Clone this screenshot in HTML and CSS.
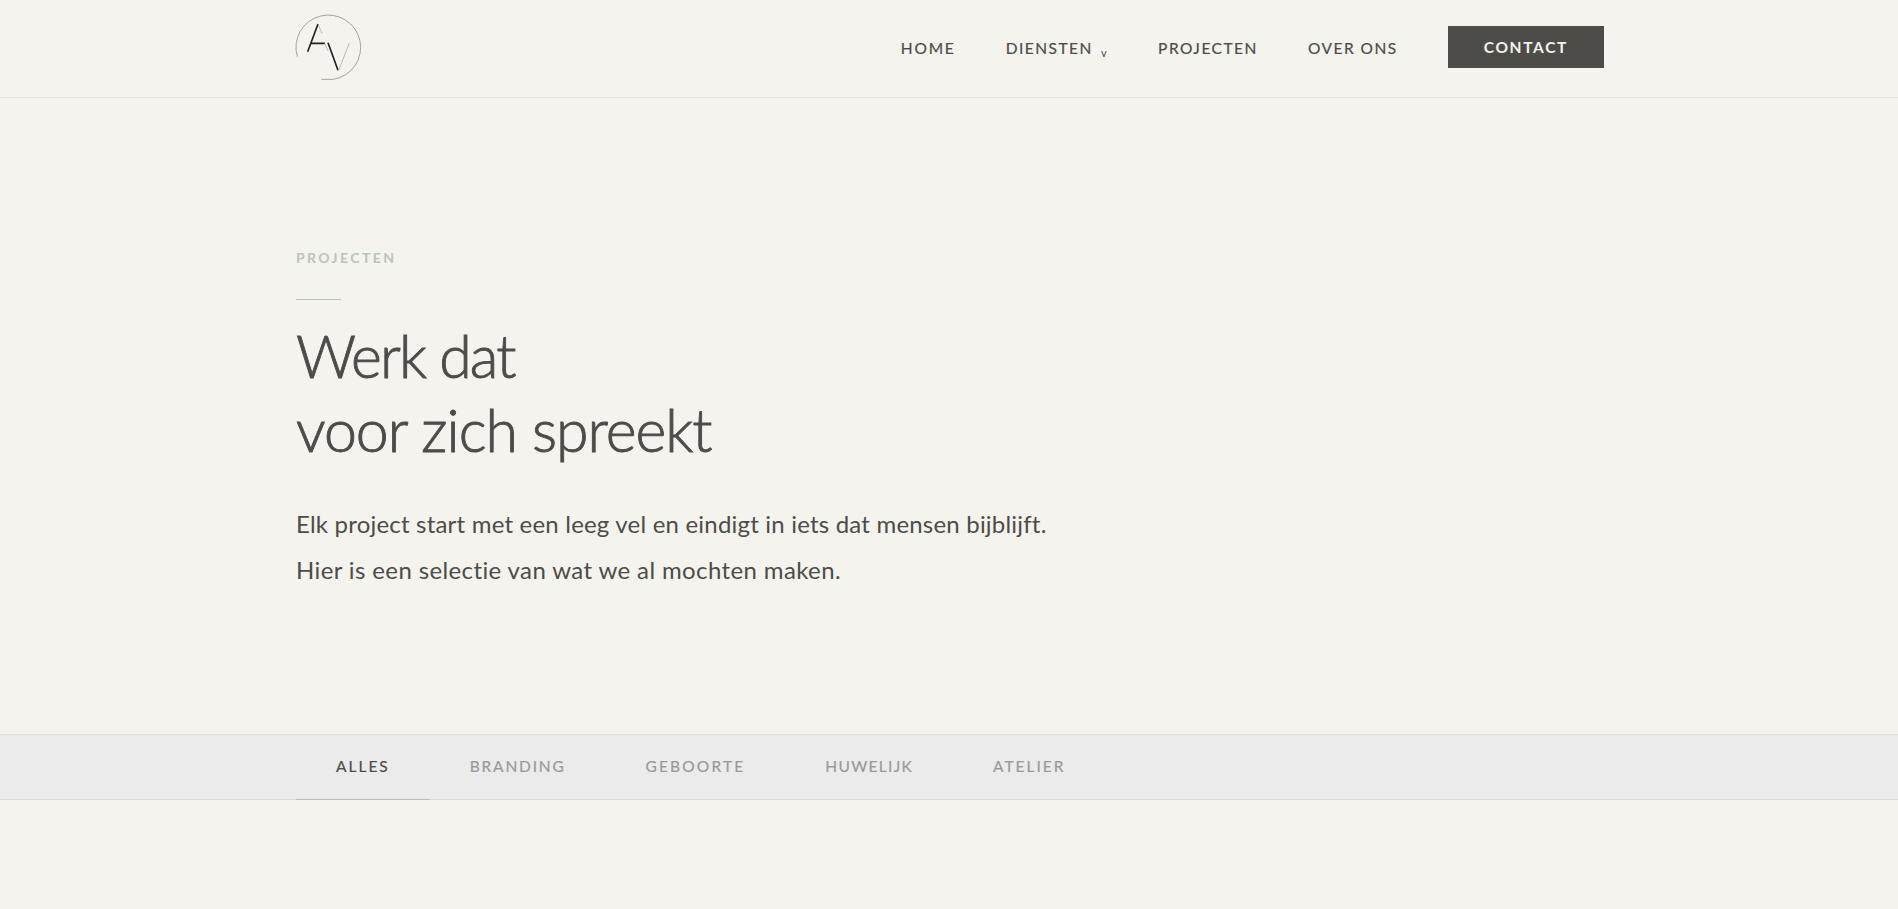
FILE: index.html
```
<!DOCTYPE html>
<html lang="nl">
<head>
  <meta charset="UTF-8" />
  <meta name="viewport" content="width=device-width, initial-scale=1.0"/>
  <title>Projecten</title>
  <link rel="stylesheet" href="styles.css">
</head>
<body>
  <header class="header">
    <div class="container header-inner">
      <a href="#" class="logo" aria-label="AV">
        <svg viewBox="48 45 195 195" fill="none">
          <path class="ring" d="M52 170 A97 97 0 1 1 160 238 L124 238"/>
          <path class="thick" d="M83 155 L114 72 M93 130 H135 M144 128 L174 211"/>
          <path class="thin" d="M114 72 L126 100 M134 130 L144 153 M176 211 L208 129"/>
        </svg>
      </a>
      <nav class="nav">
        <a href="#" class="nav-link">Home</a>
        <a href="#" class="nav-link nav-diensten">Diensten<span class="caret">v</span></a>
        <a href="#" class="nav-link nav-projecten">Projecten</a>
        <a href="#" class="nav-link nav-over">Over ons</a>
        <a href="#" class="btn">Contact</a>
      </nav>
    </div>
  </header>

  <section class="hero">
    <div class="container">
      <p class="label">Projecten</p>
      <div class="line"></div>
      <h1><span class="title-top">Werk dat</span><br>voor zich spreekt</h1>
      <p class="intro">Elk project start met een leeg vel en eindigt in iets dat mensen bijblijft.<br><span class="intro-more">Hier is een selectie van wat we al mochten maken.</span></p>
    </div>
  </section>

  <div class="filters">
    <div class="container filter-list">
      <a href="#" class="filter active">Alles</a>
      <a href="#" class="filter branding">Branding</a>
      <a href="#" class="filter geboorte">Geboorte</a>
      <a href="#" class="filter huwelijk">Huwelijk</a>
      <a href="#" class="filter atelier">Atelier</a>
    </div>
  </div>
</body>
</html>
```
FILE: styles.css
```
* {
  box-sizing: border-box;
}

body {
  font-family: Lato, 'Open Sans', sans-serif;
  margin: 0;
  background: #f4f3ee;
  color: #4d4c48;
}

a {
  color: inherit;
  text-decoration: none;
}

.container {
  width: 1308px;
  margin: 0 auto 0 296px;
}

.header {
  height: 98px;
  border-bottom: 1px solid #e2e1dd;
}

.header-inner {
  display: flex;
  justify-content: space-between;
  align-items: center;
  height: 94px;
}

.logo svg {
  display: block;
  width: 65px;
  height: 65px;
  overflow: visible;
}

.ring {
  stroke: #8f8e8a;
  stroke-width: 2.4;
}

.thick {
  stroke: #22211f;
  stroke-width: 5;
}

.thin {
  stroke: #a5a4a0;
  stroke-width: 2.2;
}

.nav {
  display: flex;
  align-items: center;
  gap: 50px;
  font-size: 15.5px;
  letter-spacing: 1.8px;
  text-transform: uppercase;
}

.nav-link {
  padding-top: 2px;
  -webkit-text-stroke: 0.2px;
}

.nav-diensten {
  letter-spacing: 1.5px;
}

.nav-projecten,
.nav-over {
  letter-spacing: 1.5px;
}

.caret {
  font-size: 11px;
  margin-left: 8px;
  text-transform: none;
  position: relative;
  top: 3px;
  -webkit-text-stroke: 0;
}

.btn {
  background: #4d4c48;
  color: #f4f3ee;
  font-weight: 700;
  letter-spacing: 1.65px;
  line-height: 42px;
  padding: 0 36px;
}

.hero {
  height: 636px;
  padding-top: 150px;
}

.label {
  margin: 0;
  color: #bcc4b9;
  font-size: 14px;
  font-weight: 700;
  letter-spacing: 2.4px;
  line-height: 20px;
  text-transform: uppercase;
}

.line {
  width: 45px;
  height: 1px;
  margin: 31px 0 19px;
  background: #bcc4b9;
}

h1 {
  margin: 0;
  font-size: 59px;
  font-weight: 300;
  letter-spacing: -1px;
  line-height: 74px;
  -webkit-text-stroke: 0.9px;
}

.title-top {
  letter-spacing: -1.9px;
}

.intro {
  margin: 34px 0 0;
  font-size: 24px;
  letter-spacing: 0.2px;
  line-height: 46px;
}

.intro-more {
  letter-spacing: 0.38px;
}

.filters {
  height: 66px;
  background: #ebebeb;
  border-top: 1px solid #dfded9;
  border-bottom: 1px solid #d8d9d7;
}

.filter-list {
  display: flex;
}

.filter {
  height: 66px;
  padding: 0 40px;
  color: #999;
  font-size: 15.5px;
  letter-spacing: 2px;
  line-height: 63px;
  text-transform: uppercase;
  -webkit-text-stroke: 0.2px;
}

.filter.active {
  color: #4d4c48;
  border-bottom: 2px solid #b9beb7;
}

.branding {
  letter-spacing: 1.8px;
}

.geboorte {
  letter-spacing: 2.15px;
}

.huwelijk {
  letter-spacing: 1.3px;
}
```
